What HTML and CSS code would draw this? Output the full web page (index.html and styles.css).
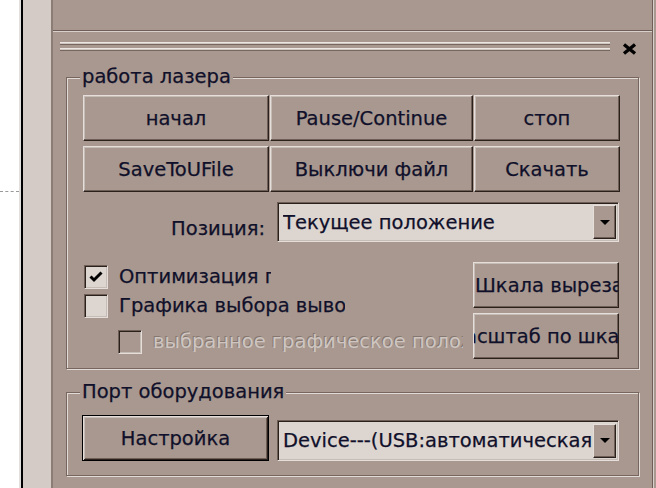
FILE: index.html
```html
<!DOCTYPE html>
<html lang="ru">
<head>
    <meta charset="UTF-8">
    <title>работа лазера</title>
    <link rel="stylesheet" href="styles.css">
</head>
<body>

<div class="gutter"><div class="dash"></div></div>
<div class="strip"></div>

<div class="panel">
    <div class="top"></div>
    <div class="titlebar">
        <div class="grip"><span></span><span></span></div>
        <svg class="close" width="15" height="12" viewBox="0 0 15 12">
            <path d="M2 1.5 L13 10.5 M13 1.5 L2 10.5" stroke="#000" stroke-width="3.4"/>
        </svg>
    </div>

    <div class="group laser">
        <span class="legend">работа лазера</span>
        <div class="btn-grid">
            <button class="btn">начал</button>
            <button class="btn">Pause/Continue</button>
            <button class="btn">стоп</button>
            <button class="btn">SaveToUFile</button>
            <button class="btn">Выключи файл</button>
            <button class="btn">Скачать</button>
        </div>
        <div class="pos-row">
            <label class="pos-label">Позиция:</label>
            <div class="combo">
                <span class="combo-text">Текущее положение</span>
                <span class="drop"><i></i></span>
            </div>
        </div>
        <div class="opts">
            <div class="checks">
                <div class="check c1">
                    <span class="box"><svg width="14" height="12" viewBox="0 0 14 12"><path d="M1.5 5.5 L5 9 L12.5 1.5" fill="none" stroke="#000" stroke-width="3"/></svg></span>
                    <span class="check-text">Оптимизация графики</span>
                </div>
                <div class="check c2">
                    <span class="box"></span>
                    <span class="check-text">Графика выбора вывода</span>
                </div>
                <div class="check c3 disabled">
                    <span class="box"></span>
                    <span class="check-text">выбранное графическое положение</span>
                </div>
            </div>
            <div class="side-btns">
                <button class="btn left">Шкала вырезания</button>
                <button class="btn">Масштаб по шкале</button>
            </div>
        </div>
    </div>

    <div class="group port">
        <span class="legend">Порт оборудования</span>
        <div class="port-row">
            <button class="btn default">Настройка</button>
            <div class="combo">
                <span class="combo-text">Device---(USB:автоматическая</span>
                <span class="drop"><i></i></span>
            </div>
        </div>
    </div>
</div>

<div class="edge"></div>

</body>
</html>
```

FILE: styles.css
```css
body {
    margin: 0;
    width: 656px;
    height: 488px;
    overflow: hidden;
    display: flex;
    font-family: "DejaVu Sans", Verdana, sans-serif;
    font-size: 19.5px;
    color: #10102a;
    -webkit-text-stroke: 0.25px;
    background-color: #fff;
}
.gutter {
    width: 21px;
    flex-shrink: 0;
    border-right: 2px solid #000;
    box-shadow: inset -2px 0 0 #e2e0de;
}
.dash {
    margin-top: 191px;
    height: 0;
    border-top: 1px dashed #9a9a9a;
    margin-right: 2px;
}
.strip {
    width: 28px;
    flex-shrink: 0;
    background-color: #d4cbc6;
    border-right: 2px solid #8c7c76;
}
.panel {
    width: 599px;
    flex-shrink: 0;
    background-color: #a8988f;
}
.edge {
    flex: 1;
    background-color: #a8988f;
    border-left: 1px solid #6e5e56;
    box-shadow: inset 1px 0 0 #d8d0cc;
}
.top {
    height: 30px;
    border-bottom: 1px solid #6e5e56;
    box-shadow: 0 1px 0 #d8d0cc;
}
.titlebar {
    height: 34px;
    box-sizing: border-box;
    margin-top: 1px;
    padding: 10px 0 0 7px;
    display: flex;
    align-items: flex-start;
}
.grip {
    width: 550px;
}
.grip span {
    display: block;
    height: 1px;
    background-color: #cfc6c1;
    border-top: 1px solid #ece6e2;
    border-bottom: 1px solid #76665e;
    margin-bottom: 3px;
}
.close {
    margin: 1px 0 0 12px;
}
.group {
    margin: 11px 0 0 13px;
    width: 573px;
    box-sizing: border-box;
    border: 1px solid #76665e;
    box-shadow: inset 1px 1px 0 #e2dad6, 1px 1px 0 #e2dad6;
    padding: 0 19px 0 16px;
}
.legend {
    display: table;
    margin: -12px 0 0 -3px;
    padding: 0 2px;
    line-height: 22px;
    background-color: #a8988f;
}
.btn-grid {
    margin-top: 7px;
    display: grid;
    grid-template-columns: 186px 203px 146px;
    grid-auto-rows: 46px;
    column-gap: 1px;
    row-gap: 5px;
}
.btn {
    font: inherit;
    color: inherit;
    background-color: #a8988f;
    border: 1px solid;
    border-color: #e6deda #2a201c #2a201c #e6deda;
    box-shadow: inset -1px -1px 0 #6e5e56, inset 1px 1px 0 #c6bcb6;
    padding: 0;
    height: 46px;
    display: flex;
    align-items: center;
    justify-content: center;
    white-space: nowrap;
    overflow: hidden;
}
.btn.left {
    justify-content: flex-start;
    padding-left: 1px;
}
.btn.default {
    width: 187px;
    margin-left: -1px;
    border: 1px solid #000;
    box-shadow: inset 1px 1px 0 #e6deda, inset -1px -1px 0 #2a201c, inset 2px 2px 0 #c6bcb6, inset -2px -2px 0 #6e5e56;
}
.pos-row {
    margin-top: 10px;
    display: flex;
    justify-content: flex-end;
    align-items: flex-start;
}
.pos-label {
    line-height: 22px;
    padding-top: 16px;
    margin-right: 12px;
}
.combo {
    width: 342px;
    height: 40px;
    box-sizing: border-box;
    display: flex;
    align-items: center;
    background-color: #ddd5d0;
    border: 1px solid;
    border-color: #6e5e56 #e6deda #e6deda #6e5e56;
    box-shadow: inset 1px 1px 0 #2a201c, inset -1px -1px 0 #c6bcb6;
    padding: 2px 2px 2px 5px;
}
.combo-text {
    flex: 1;
    white-space: nowrap;
    overflow: hidden;
}
.drop {
    width: 23px;
    height: 34px;
    box-sizing: border-box;
    background-color: #a8988f;
    border: 1px solid;
    border-color: #e6deda #2a201c #2a201c #e6deda;
    box-shadow: inset -1px -1px 0 #6e5e56;
    display: flex;
    align-items: center;
    justify-content: center;
}
.drop i {
    width: 0;
    height: 0;
    border-left: 5px solid transparent;
    border-right: 5px solid transparent;
    border-top: 5px solid #000;
}
.opts {
    margin-top: 20px;
    padding-bottom: 9px;
    display: flex;
    justify-content: space-between;
}
.checks {
    padding-top: 3px;
}
.check {
    display: flex;
    align-items: center;
    height: 24px;
}
.check.c1 {
    margin-left: 1px;
}
.check.c2 {
    margin: 5px 0 0 1px;
}
.check.c3 {
    margin: 12px 0 0 35px;
}
.box {
    width: 24px;
    height: 24px;
    box-sizing: border-box;
    flex-shrink: 0;
    background-color: #ddd5d0;
    border: 1px solid;
    border-color: #6e5e56 #e6deda #e6deda #6e5e56;
    box-shadow: inset 1px 1px 0 #2a201c, inset -1px -1px 0 #c6bcb6;
    display: flex;
    align-items: center;
    justify-content: center;
}
.check-text {
    margin-left: 11px;
    white-space: nowrap;
    overflow: hidden;
    line-height: 24px;
}
.c1 .check-text {
    width: 152px;
}
.c2 .check-text {
    width: 226px;
}
.c3 .check-text {
    width: 310px;
}
.disabled .box {
    background-color: #a8988f;
}
.disabled .check-text {
    color: #cfc6c1;
    -webkit-text-stroke: 0;
    text-shadow: -1px -1px 0 #85776f;
}
.side-btns {
    width: 146px;
    display: flex;
    flex-direction: column;
    gap: 5px;
}
.side-btns .btn {
    width: 146px;
}
.port {
    margin-top: 23px;
}
.port-row {
    margin-top: 12px;
    padding-bottom: 14px;
    display: flex;
    align-items: flex-end;
    justify-content: space-between;
}
.port .combo {
    height: 41px;
}
```
